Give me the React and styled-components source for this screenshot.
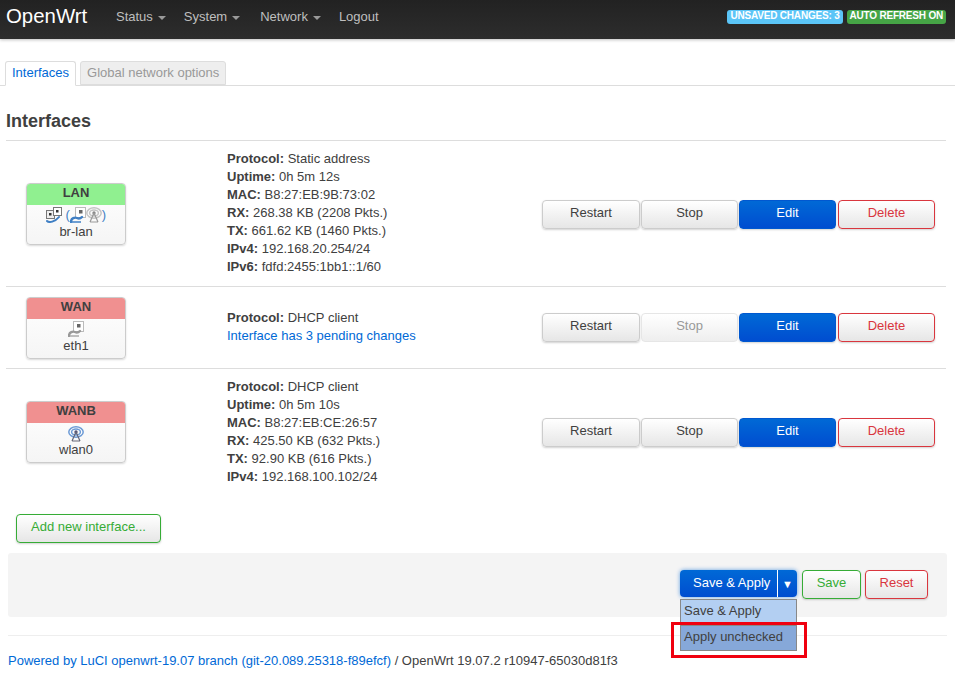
import React from 'react';
import styled, { createGlobalStyle, css } from 'styled-components';

const GlobalStyle = createGlobalStyle`
  html, body {
    margin: 0;
    padding: 0;
    background: #fff;
    font-family: "Liberation Sans", Arial, sans-serif;
    font-size: 13px;
    line-height: 18px;
    color: #404040;
  }
  * {
    box-sizing: border-box;
  }
`;

const Page = styled.div`
  position: relative;
  min-height: 697px;
`;

const Header = styled.header`
  height: 39px;
  display: flex;
  align-items: flex-start;
  background: linear-gradient(#222, #2d2d2d);
  box-shadow: 0 1px 3px rgba(0, 0, 0, 0.25);
`;

const Brand = styled.a`
  margin: 3px 0 0 6px;
  width: 110px;
  font-size: 20.4px;
  line-height: 26px;
  color: #fff;
`;

const Nav = styled.nav`
  display: flex;
  flex: 1;
  padding-top: 8px;
`;

const NavItem = styled.a`
  display: flex;
  align-items: center;
  height: 18px;
  margin-right: ${(p) => p.$gap}px;
  color: #bfbfbf;
`;

const Caret = styled.span`
  width: 0;
  height: 0;
  margin: 2px 0 0 5px;
  border-left: 4px solid transparent;
  border-right: 4px solid transparent;
  border-top: 4px solid #999;
`;

const Indicators = styled.div`
  display: flex;
  gap: 4px;
  margin: 10px 9px 0 0;
`;

const Indicator = styled.span`
  height: 14px;
  padding: 0 3px;
  border-radius: 3px;
  font-size: 10px;
  font-weight: 700;
  letter-spacing: -0.2px;
  line-height: 12px;
  color: #fff;
  background: ${(p) => p.$color};
`;

const Tabs = styled.ul`
  display: flex;
  gap: 4px;
  height: 25px;
  margin: 22px 0 0;
  padding: 0 0 0 5px;
  list-style: none;
  border-bottom: 1px solid #ddd;
`;

const Tab = styled.li`
  height: ${(p) => (p.$active ? 25 : 24)}px;
  padding: 2px 6px 0;
  border: 1px solid #ddd;
  border-radius: 3px 3px 0 0;
  color: ${(p) => (p.$active ? '#0069d6' : '#999')};
  background: ${(p) => (p.$active ? '#fff' : '#eee')};
  border-bottom-color: ${(p) => (p.$active ? '#fff' : '#ddd')};
`;

const Title = styled.h2`
  margin: 24px 0 8px 6px;
  font-size: 18px;
  line-height: 22px;
  font-weight: 700;
  color: #404040;
`;

const Table = styled.div`
  margin-left: 6px;
  width: 940px;
  border-top: 1px solid #ddd;
`;

const Row = styled.div`
  display: grid;
  grid-template-columns: 221px 315px 393px;
  align-items: center;
  height: ${(p) => p.$height}px;
  border-bottom: ${(p) => (p.$last ? 'none' : '1px solid #ddd')};
`;

const BadgeCell = styled.div`
  padding-left: 20px;
`;

const Badge = styled.div`
  width: 100px;
  height: 62px;
  overflow: hidden;
  border: 1px solid #ccc;
  border-radius: 4px;
  box-shadow: 0 1px 2px rgba(0, 0, 0, 0.15);
  background: linear-gradient(#fff, #f5f5f5);
  text-align: center;
`;

const BadgeTitle = styled.div`
  height: 21px;
  font-weight: 700;
  font-size: 13px;
  line-height: 18px;
  background: ${(p) => p.$color};
`;

const BadgeIcons = styled.div`
  display: flex;
  align-items: center;
  justify-content: center;
  height: 17px;
  margin-top: 2px;
  color: #3f7fc4;
  font-size: 13px;
`;

const BadgeName = styled.div`
  line-height: 16px;
`;

const Info = styled.div`
  line-height: 18px;
  margin-bottom: ${(p) => (p.$lift ? 2 : 0)}px;
`;

const InfoLine = styled.div`
  white-space: nowrap;
`;

const PendingLink = styled.a`
  color: #0069d6;
`;

const Actions = styled.div`
  display: flex;
  gap: 1px;
  margin-top: ${(p) => (p.$drop ? 2 : 0)}px;
`;

const tones = {
  plain: css`
    color: #404040;
    border-color: #ccc;
    background: linear-gradient(#fff, #e6e6e6);
  `,
  disabled: css`
    color: #999;
    border-color: #e6e6e6;
    background: linear-gradient(#fff, #eee);
    box-shadow: none;
  `,
  primary: css`
    color: #fff;
    border-color: #0058d0;
    background: linear-gradient(#0069d6, #004dd0);
  `,
  negative: css`
    color: #d9363e;
    border-color: #d9363e;
    background: linear-gradient(#fff, #e6e6e6);
  `,
  positive: css`
    color: #36ac36;
    border-color: #36ac36;
    background: linear-gradient(#fff, #e6e6e6);
  `,
};

const Button = styled.button`
  width: ${(p) => p.$width}px;
  height: 29px;
  margin-left: ${(p) => p.$offset || 0}px;
  padding: 0 0 3px;
  border: 1px solid;
  border-radius: 4px;
  font-family: inherit;
  font-size: 13px;
  line-height: 18px;
  box-shadow: 0 1px 2px rgba(0, 0, 0, 0.18);
  ${(p) => tones[p.$tone || 'plain']}
`;

const AddRow = styled.div`
  padding: 19px 0 10px 16px;
`;

const ActionBar = styled.div`
  display: flex;
  justify-content: flex-end;
  gap: 4px;
  height: 64px;
  margin: 0 8px;
  padding: 17px 19px 0 0;
  background: #f4f4f4;
  border-radius: 3px;
`;

const ApplyGroup = styled.div`
  position: relative;
  display: flex;
  width: 117px;
  height: 27px;
  margin-right: 1px;
  border-radius: 4px;
  color: #fff;
  background: linear-gradient(#0069d6, #004dd0);
  box-shadow: 0 0 4px rgba(0, 105, 214, 0.6);
`;

const ApplyLabel = styled.span`
  flex: 1;
  padding: 4px 0 0 13px;
`;

const ApplyToggle = styled.span`
  display: flex;
  align-items: center;
  justify-content: center;
  width: 20px;
  border-left: 1px solid #fff;
  font-size: 11px;
`;

const ApplyMenu = styled.ul`
  position: absolute;
  top: 29px;
  left: 0;
  width: 117px;
  margin: 0;
  padding: 0;
  list-style: none;
  border: 1px solid #888;
  color: #404040;
`;

const ApplyOption = styled.li`
  height: 25px;
  padding: 2px 0 0 3px;
  background: ${(p) => (p.$hover ? '#86a8d9' : '#b3cff2')};
  border-top: ${(p) => (p.$hover ? '1px solid #888' : 'none')};
`;

const Highlight = styled.div`
  position: absolute;
  left: 671px;
  top: 622px;
  width: 136px;
  height: 36px;
  border: 3px solid #f0000f;
`;

const Footer = styled.footer`
  margin: 18px 8px 0;
  padding-top: 16px;
  border-top: 1px solid #eee;
`;

const FooterLink = styled.a`
  color: #0069d6;
`;

const PortIcon = ({ live }) => (
  <svg width="16" height="16" viewBox="0 0 16 16">
    <rect x="5.5" y="0.5" width="10" height="10" fill="#fff" stroke="#bbb" />
    <rect x="9" y="3" width="3.5" height="3.5" fill="#666" />
    <path d="M1 15 C1 11 5 10 7 11 C9 12 11 11 12 10" fill="none" stroke={live ? '#3f7fc4' : '#999'} strokeWidth="2.4" strokeLinecap="round" />
    <path d="M2 15 H11" fill="none" stroke={live ? '#3f7fc4' : '#aaa'} strokeWidth="1.4" />
  </svg>
);

const SwitchIcon = () => (
  <svg width="16" height="16" viewBox="0 0 16 16">
    <rect x="0.5" y="3.5" width="8" height="8" fill="#eee" stroke="#777" />
    <rect x="7.5" y="0.5" width="8" height="8" fill="#fff" stroke="#777" />
    <rect x="3" y="6" width="2.5" height="2.5" fill="#333" />
    <rect x="10" y="3" width="2.5" height="2.5" fill="#333" />
    <path d="M1 14 C3 16 9 15 13 10" fill="none" stroke="#3f7fc4" strokeWidth="2" strokeLinecap="round" />
  </svg>
);

const WifiIcon = ({ live }) => {
  const tone = live ? '#6d9bd6' : '#c4c4c4';
  return (
    <svg width="16" height="16" viewBox="0 0 16 16">
      <ellipse cx="8" cy="6" rx="7.2" ry="5.2" fill="none" stroke={tone} strokeWidth="1.5" />
      <ellipse cx="8" cy="6" rx="4.4" ry="3" fill="none" stroke={tone} strokeWidth="1.5" />
      <circle cx="8" cy="6" r="1.7" fill={live ? '#557' : '#888'} />
      <path d="M8 6 L4 15 M8 6 L12 15 M4 15 H12" fill="none" stroke={live ? '#667' : '#999'} strokeWidth="1.2" />
    </svg>
  );
};

const stats = (pairs) =>
  pairs.map(([label, value]) => (
    <InfoLine key={label}>
      <strong>{label}</strong> {value}
    </InfoLine>
  ));

const RowActions = ({ stopDisabled, drop }) => (
  <Actions $drop={drop}>
    <Button $width={98}>Restart</Button>
    <Button $width={97} $tone={stopDisabled ? 'disabled' : 'plain'}>Stop</Button>
    <Button $width={97} $tone="primary">Edit</Button>
    <Button $width={97} $tone="negative" $offset={1}>Delete</Button>
  </Actions>
);

const App = () => (
  <Page>
    <GlobalStyle />
    <Header>
      <Brand>OpenWrt</Brand>
      <Nav>
        <NavItem $gap={18}>Status<Caret /></NavItem>
        <NavItem $gap={20}>System<Caret /></NavItem>
        <NavItem $gap={18}>Network<Caret /></NavItem>
        <NavItem>Logout</NavItem>
      </Nav>
      <Indicators>
        <Indicator $color="#5bc5f7">UNSAVED CHANGES: 3</Indicator>
        <Indicator $color="#46a546">AUTO REFRESH ON</Indicator>
      </Indicators>
    </Header>

    <Tabs>
      <Tab $active>Interfaces</Tab>
      <Tab>Global network options</Tab>
    </Tabs>

    <Title>Interfaces</Title>

    <Table>
      <Row $height={146}>
        <BadgeCell>
          <Badge>
            <BadgeTitle $color="#90f090">LAN</BadgeTitle>
            <BadgeIcons>
              <SwitchIcon />&nbsp;(<PortIcon live /><WifiIcon />)
            </BadgeIcons>
            <BadgeName>br-lan</BadgeName>
          </Badge>
        </BadgeCell>
        <Info $lift>
          {stats([
            ['Protocol:', 'Static address'],
            ['Uptime:', '0h 5m 12s'],
            ['MAC:', 'B8:27:EB:9B:73:02'],
            ['RX:', '268.38 KB (2208 Pkts.)'],
            ['TX:', '661.62 KB (1460 Pkts.)'],
            ['IPv4:', '192.168.20.254/24'],
            ['IPv6:', 'fdfd:2455:1bb1::1/60'],
          ])}
        </Info>
        <RowActions drop />
      </Row>
      <Row $height={82}>
        <BadgeCell>
          <Badge>
            <BadgeTitle $color="#f09090">WAN</BadgeTitle>
            <BadgeIcons><PortIcon /></BadgeIcons>
            <BadgeName>eth1</BadgeName>
          </Badge>
        </BadgeCell>
        <Info $lift>
          {stats([['Protocol:', 'DHCP client']])}
          <PendingLink>Interface has 3 pending changes</PendingLink>
        </Info>
        <RowActions stopDisabled />
      </Row>
      <Row $height={126} $last>
        <BadgeCell>
          <Badge>
            <BadgeTitle $color="#f09090">WANB</BadgeTitle>
            <BadgeIcons><WifiIcon live /></BadgeIcons>
            <BadgeName>wlan0</BadgeName>
          </Badge>
        </BadgeCell>
        <Info>
          {stats([
            ['Protocol:', 'DHCP client'],
            ['Uptime:', '0h 5m 10s'],
            ['MAC:', 'B8:27:EB:CE:26:57'],
            ['RX:', '425.50 KB (632 Pkts.)'],
            ['TX:', '92.90 KB (616 Pkts.)'],
            ['IPv4:', '192.168.100.102/24'],
          ])}
        </Info>
        <RowActions />
      </Row>
    </Table>

    <AddRow>
      <Button $width={145} $tone="positive">Add new interface...</Button>
    </AddRow>

    <ActionBar>
      <ApplyGroup>
        <ApplyLabel>Save &amp; Apply</ApplyLabel>
        <ApplyToggle>▼</ApplyToggle>
        <ApplyMenu>
          <ApplyOption>Save &amp; Apply</ApplyOption>
          <ApplyOption $hover>Apply unchecked</ApplyOption>
        </ApplyMenu>
      </ApplyGroup>
      <Button $width={59} $tone="positive">Save</Button>
      <Button $width={63} $tone="negative">Reset</Button>
    </ActionBar>

    <Footer>
      <FooterLink>Powered by LuCI openwrt-19.07 branch (git-20.089.25318-f89efcf)</FooterLink>
      {' / OpenWrt 19.07.2 r10947-65030d81f3'}
    </Footer>

    <Highlight />
  </Page>
);

export default App;
